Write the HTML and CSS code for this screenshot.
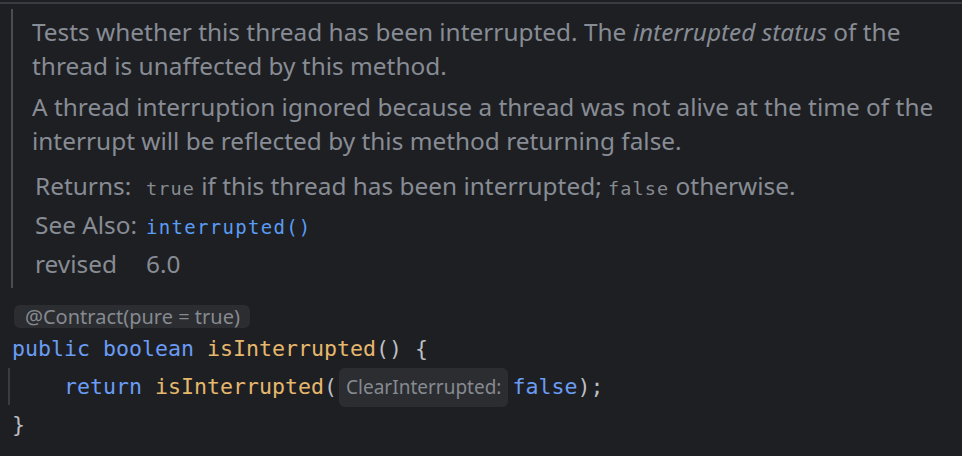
FILE: index.html
```html
<!DOCTYPE html>
<html>
<head>
<meta charset="utf-8">
<link rel="stylesheet" href="styles.css">
</head>
<body>
<div class="topline"></div>
<div class="doc">
  <p class="para">Tests whether this thread has been interrupted. The <i>interrupted status</i> of the thread is unaffected by this method.</p>
  <p class="para">A thread interruption ignored because a thread was not alive at the time of the interrupt will be reflected by this method returning false.</p>
  <div class="sections">
    <div class="label">Returns:</div>
    <div class="value"><code class="mono">true</code> if this thread has been interrupted; <code class="mono">false</code> otherwise.</div>
    <div class="label">See Also:</div>
    <div class="value"><code class="mono link">interrupted()</code></div>
    <div class="label">revised</div>
    <div class="value">6.0</div>
  </div>
</div>
<div class="code">
  <div class="annot-line"><span class="hint annot">@Contract(pure = true)</span></div>
  <div class="line first"><span class="kw">public</span> <span class="kw">boolean</span> <span class="fn">isInterrupted</span><span class="pn">() {</span></div>
  <div class="line"><span class="guide"></span>    <span class="kw">return</span> <span class="fn">isInterrupted</span><span class="pn">(</span><span class="hint param">ClearInterrupted:</span><span class="kw">false</span><span class="pn">);</span></div>
  <div class="line"><span class="pn">}</span></div>
</div>
</body>
</html>
```
FILE: styles.css
```css
html, body {
  margin: 0;
  padding: 0;
  background: #1e1f22;
  width: 962px;
  height: 456px;
  overflow: hidden;
}
.topline {
  margin-top: 2px;
  height: 2px;
  background: #393b40;
}
.doc {
  margin: 5px 0 0 11px;
  border-left: 2px solid #4a4d52;
  padding: 6px 0 0 19px;
  font-family: "Noto Sans", sans-serif;
  font-size: 24.4px;
  color: #878c95;
  height: 279px;
  box-sizing: border-box;
}
.para {
  margin: 0 0 7px 0;
  line-height: 34px;
  width: 925px;
}
.para i {
  font-style: italic;
}
.sections {
  display: grid;
  grid-template-columns: 111px auto;
  grid-auto-rows: 39px;
  margin-left: 3px;
  margin-top: 8px;
}
.label, .value {
  line-height: 39px;
  height: 39px;
  white-space: nowrap;
}
.mono {
  font-family: "DejaVu Sans Mono", monospace;
  font-size: 18.5px;
  line-height: 1;
  letter-spacing: 1.1px;
  color: #878b92;
}
.link {
  font-size: 19px;
  letter-spacing: 1.3px;
  color: #5a9cf5;
}
.code {
  padding-left: 12px;
  font-family: "DejaVu Sans Mono", monospace;
  font-size: 21.6px;
  color: #bcbec4;
}
.annot-line {
  margin-top: 17px;
  height: 23px;
}
.line {
  line-height: 37.5px;
  white-space: pre;
  position: relative;
}
.line.first {
  margin-top: 2px;
}
.hint {
  font-family: "Noto Sans", sans-serif;
  background: #2b2d30;
  color: #868a91;
  border-radius: 6px;
}
.annot {
  display: inline-block;
  height: 23px;
  line-height: 23px;
  font-size: 20px;
  padding: 0 10px 0 11px;
  margin-left: 2px;
  vertical-align: top;
}
.param {
  font-size: 19px;
  padding: 6px 7px 7px 7px;
  margin: 0 4px 0 2px;
}
.kw { color: #6a9cf5; }
.fn { color: #e6b86e; }
.pn { color: #bcbec4; }
.guide {
  position: absolute;
  left: -4px;
  top: 0;
  width: 2px;
  height: 37px;
  background: #3a3c40;
}
```
